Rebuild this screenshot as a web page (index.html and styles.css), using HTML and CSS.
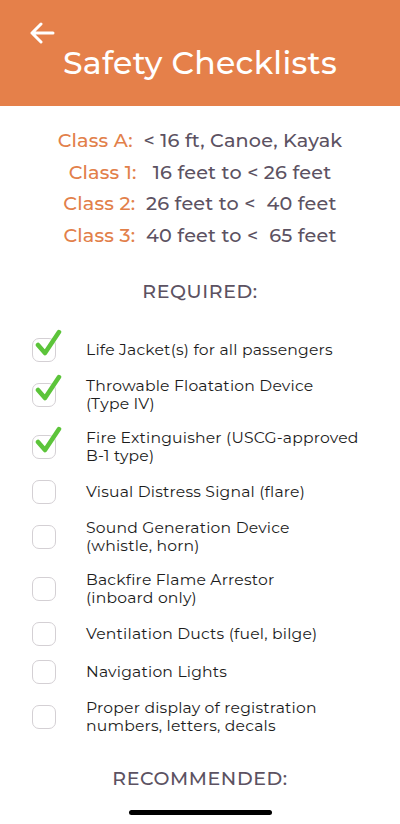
FILE: index.html
```html
<!DOCTYPE html>
<html>
<head>
<meta charset="utf-8">
<link rel="stylesheet" href="styles.css">
</head>
<body>
<div class="screen">
  <header class="header">
    <svg class="back" width="26" height="22" viewBox="0 0 26 22">
      <path d="M24 11H3M12 2L3 11l9 9" fill="none" stroke="#fff" stroke-width="3" stroke-linecap="round" stroke-linejoin="round"/>
    </svg>
    <h1 class="title">Safety Checklists</h1>
  </header>
  <section class="classes">
    <div class="cls"><span class="lbl">Class A:</span>  <span class="val">&lt; 16 ft, Canoe, Kayak</span></div>
    <div class="cls"><span class="lbl">Class 1:</span>   <span class="val">16 feet to &lt; 26 feet</span></div>
    <div class="cls"><span class="lbl">Class 2:</span>  <span class="val">26 feet to &lt;  40 feet</span></div>
    <div class="cls"><span class="lbl">Class 3:</span>  <span class="val">40 feet to &lt;  65 feet</span></div>
  </section>
  <h2 class="section-title">REQUIRED:</h2>
  <ul class="list">
    <li class="item"><span class="box checked"><svg class="check" width="30" height="30" viewBox="0 0 30 30"><path d="M5 16l7 8L26 3" fill="none" stroke="#5cc43a" stroke-width="4.5" stroke-linecap="round" stroke-linejoin="round"/></svg></span><span class="text">Life Jacket(s) for all passengers</span></li>
    <li class="item"><span class="box checked"><svg class="check" width="30" height="30" viewBox="0 0 30 30"><path d="M5 16l7 8L26 3" fill="none" stroke="#5cc43a" stroke-width="4.5" stroke-linecap="round" stroke-linejoin="round"/></svg></span><span class="text">Throwable Floatation Device<br>(Type IV)</span></li>
    <li class="item"><span class="box checked"><svg class="check" width="30" height="30" viewBox="0 0 30 30"><path d="M5 16l7 8L26 3" fill="none" stroke="#5cc43a" stroke-width="4.5" stroke-linecap="round" stroke-linejoin="round"/></svg></span><span class="text">Fire Extinguisher (USCG-approved<br>B-1 type)</span></li>
    <li class="item"><span class="box"></span><span class="text">Visual Distress Signal (flare)</span></li>
    <li class="item"><span class="box"></span><span class="text">Sound Generation Device<br>(whistle, horn)</span></li>
    <li class="item"><span class="box"></span><span class="text">Backfire Flame Arrestor<br>(inboard only)</span></li>
    <li class="item"><span class="box"></span><span class="text">Ventilation Ducts (fuel, bilge)</span></li>
    <li class="item"><span class="box"></span><span class="text">Navigation Lights</span></li>
    <li class="item"><span class="box"></span><span class="text">Proper display of registration<br>numbers, letters, decals</span></li>
  </ul>
  <h2 class="section-title rec">RECOMMENDED:</h2>
  <div class="home-bar"></div>
</div>
</body>
</html>
```
FILE: styles.css
```css
* { box-sizing: border-box; }
html, body { margin: 0; padding: 0; background: #fff; }
body { font-family: "Montserrat", Lato, "Open Sans", sans-serif; }
.screen { width: 400px; height: 824px; position: relative; overflow: hidden; }
.header {
  background: #e5804a;
  height: 106px;
  padding: 22px 0 0 0;
  display: flex;
  flex-direction: column;
}
.back { margin-left: 29px; display: block; }
.title {
  margin: 1px 0 0 0;
  text-align: center;
  color: #fff;
  font-weight: 500;
  font-size: 31.5px;
  line-height: 36px;
  letter-spacing: 0.3px;
}
.classes { padding-top: 19px; display: flex; flex-direction: column; align-items: center; }
.cls {
  white-space: pre;
  font-size: 19.2px;
  line-height: 31.5px;
  font-weight: 500;
  letter-spacing: 0.2px;
}
.lbl { color: #e2804a; }
.val { color: #5c5262; }
.section-title {
  margin: 0;
  text-align: center;
  font-size: 19px;
  font-weight: 500;
  color: #5c5262;
  letter-spacing: 0.6px;
  line-height: 24px;
  padding-top: 29px;
}
.list { list-style: none; margin: 0; padding: 34px 0 0 32px; }
.item { display: flex; align-items: center; min-height: 24px; margin-bottom: 14px; }
.box {
  width: 24px; height: 24px; flex: none;
  border: 1.5px solid #d4d0d4; border-radius: 7px;
  position: relative;
}
.check { position: absolute; left: 0; top: -10px; }
.text {
  margin-left: 30px;
  padding: 1px 0;
  font-size: 15.6px;
  line-height: 18px;
  color: #1c1c1c;
  letter-spacing: 0.2px;
}
.rec { padding-top: 17px; }
.home-bar {
  position: absolute; left: 129px; bottom: 9px;
  width: 143px; height: 5px; border-radius: 3px; background: #000;
}
```
